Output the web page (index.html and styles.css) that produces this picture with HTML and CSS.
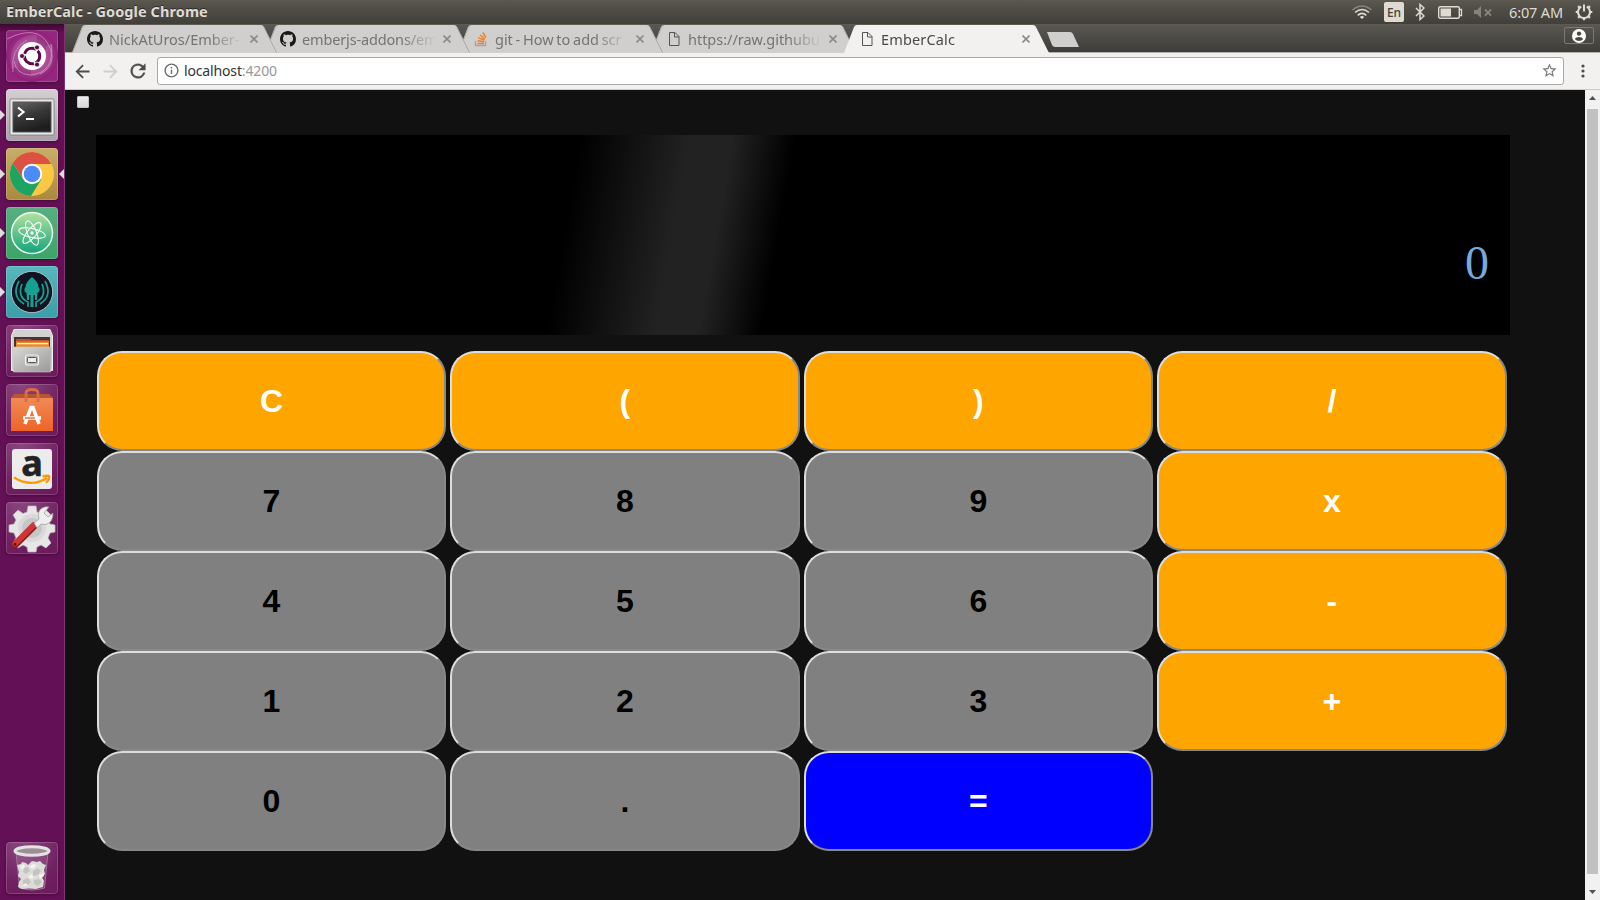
FILE: index.html
```html
<!DOCTYPE html>
<html lang="en">
<head>
<meta charset="utf-8">
<title>EmberCalc</title>
<link rel="stylesheet" href="styles.css">
</head>
<body>
<svg class="defs" width="0" height="0">
  <defs>
    <linearGradient id="screen" x1="0" y1="0" x2=".4" y2="1"><stop offset="0" stop-color="#666"/><stop offset=".5" stop-color="#393939"/><stop offset="1" stop-color="#1e1e1e"/></linearGradient>
    <linearGradient id="metal" x1="0" y1="0" x2="1" y2="1"><stop offset="0" stop-color="#d8d8d6"/><stop offset="1" stop-color="#999"/></linearGradient>
    <linearGradient id="bag" x1="0" y1="0" x2="0" y2="1"><stop offset="0" stop-color="#f08a56"/><stop offset="1" stop-color="#ee6426"/></linearGradient>
    <linearGradient id="leaf" x1="0" y1="0" x2="0" y2="1"><stop offset="0" stop-color="#b4e2a0"/><stop offset="1" stop-color="#12a479"/></linearGradient>
    <radialGradient id="glow"><stop offset="0" stop-color="#b96ba8"/><stop offset="1" stop-color="#8e1f77"/></radialGradient>
    <symbol id="github" viewBox="0 0 16 16"><path fill="#191919" d="M8 0C3.58 0 0 3.58 0 8c0 3.54 2.29 6.53 5.47 7.59.4.07.55-.17.55-.38 0-.19-.01-.82-.01-1.49-2.01.37-2.53-.49-2.69-.94-.09-.23-.48-.94-.82-1.13-.28-.15-.68-.52-.01-.53.63-.01 1.08.58 1.23.82.72 1.21 1.87.87 2.33.66.07-.52.28-.87.51-1.07-1.78-.2-3.64-.89-3.64-3.95 0-.87.31-1.59.82-2.15-.08-.2-.36-1.02.08-2.12 0 0 .67-.21 2.2.82.64-.18 1.32-.27 2-.27s1.36.09 2 .27c1.53-1.04 2.2-.82 2.2-.82.44 1.1.16 1.92.08 2.12.51.56.82 1.27.82 2.15 0 3.07-1.87 3.75-3.65 3.95.29.25.54.73.54 1.48 0 1.07-.01 1.93-.01 2.2 0 .21.15.46.55.38A8.01 8.01 0 0 0 16 8c0-4.42-3.58-8-8-8z"/></symbol>
    <symbol id="page" viewBox="0 0 16 16"><path fill="none" stroke="#555" d="M3.500 1.500h5.500l4 4v9h-9.500zM8.500 1.500v4.500h4.500"/></symbol>
    <symbol id="cross" viewBox="0 0 8 8"><path stroke="#8b8a88" stroke-width="1.600" d="M.5.500l7 7M7.500.500l-7 7"/></symbol>
    <symbol id="tabshape" viewBox="0 0 205 28"><path fill="currentColor" d="M0 28L10 2Q11 0 13 0H189Q191 0 192 2L205 28z"/><path fill="none" stroke="#a9a8a5" d="M.5 27.500L10.500 2Q11 .500 13 .500M191.500 1.500L204.500 27.500"/></symbol>
    <symbol id="tabactive" viewBox="0 0 205 28"><path fill="currentColor" d="M0 28L10 2Q11 0 13 0H189Q191 0 192 2L205 28z"/></symbol>
  </defs>
</svg>

<header class="panel">
  <span class="panel-title">EmberCalc - Google Chrome</span>
  <div class="status">
    <svg class="wifi" width="22" height="16" viewBox="0 0 22 16" fill="none" stroke="#dfdbd2" stroke-width="1.600"><path stroke="#84827a" d="M1.500 6Q11-2 20.500 6"/><path d="M4 8.500Q11 2.500 18 8.500M6.700 11.300Q11 7.500 15.300 11.300"/><path fill="#dfdbd2" stroke="none" d="M8.700 13Q11 11.200 13.300 13L11 15z"/></svg>
    <span class="lang">En</span>
    <svg class="bt" width="10" height="18" viewBox="0 0 10 18" fill="none" stroke="#dfdbd2" stroke-width="1.500"><path d="M1 5l8 8-4 3.500v-15L9 5l-8 8"/></svg>
    <svg class="batt" width="25" height="13" viewBox="0 0 25 13"><rect x=".7" y=".7" width="20.600" height="11.600" rx="1.500" fill="none" stroke="#dfdbd2" stroke-width="1.400"/><path fill="#dfdbd2" d="M2.500 2.500H13v8H2.500z"/><path fill="none" stroke="#dfdbd2" stroke-width="1.300" d="M21.500 3.500h2v6h-2"/></svg>
    <svg class="vol" width="18" height="12" viewBox="0 0 18 12"><path fill="#85837c" d="M0 4h3l4-4v12L3 8H0z"/><path stroke="#85837c" stroke-width="1.800" d="M11 3.500l6 6M17 3.500l-6 6"/></svg>
    <span class="clock">6:07 AM</span>
    <svg class="gear" width="18" height="18" viewBox="0 0 18 18" fill="none" stroke="#dfdbd2"><path stroke-width="2" d="M6.200 3.700a6 6 0 1 0 5.600 0M9 1.500v7"/><path stroke-width="2.200" d="M.7 9H3M15 9h2.300M9 15v2.300M3.100 3.100l1.600 1.600M14.900 3.100l-1.600 1.600M3.100 14.900l1.600-1.600M14.900 14.900l-1.600-1.600"/></svg>
  </div>
</header>

<div class="desktop">
  <nav class="launcher">
    <div class="app dash"><svg viewBox="0 0 52 52"><circle cx="26" cy="26" r="26" fill="url(#glow)"/><g fill="none" stroke="#dca4cf" stroke-opacity=".65"><path d="M1 9Q31-6 42 14T34 44M7 42Q4 19 21 10M45 14q4 29-21 31Q10 44 8 31"/><path stroke-opacity=".18" stroke-width="7" d="M9 38Q4 9 31 8M43 15q4 26-18 28"/></g><circle cx="26" cy="26" r="14" fill="#fff"/><circle cx="26" cy="26" r="7.700" fill="none" stroke="#5c0b4b" stroke-width="3" stroke-dasharray="14.200 1.920" stroke-dashoffset="6"/><g fill="#5c0b4b" stroke="#fff" stroke-width=".8"><circle cx="16" cy="26" r="2.500"/><circle cx="31" cy="17.400" r="2.500"/><circle cx="31" cy="34.600" r="2.500"/></g></svg></div>
    <div class="app terminal running"><svg viewBox="0 0 52 52"><rect x="4" y="10" width="44" height="36" rx="1" fill="#e9e9e9" stroke="#777" stroke-width=".8"/><rect x="7" y="13" width="38" height="30" fill="url(#screen)" stroke="#555"/><path fill="none" stroke="#fff" stroke-width="2.200" d="M12 18.500l5.500 4.500-5.500 4.500M20 30h8"/></svg></div>
    <div class="app chrome running focused"><svg viewBox="0 0 52 52"><circle cx="26" cy="26" r="22" fill="#fcc844"/><path fill="#dd5144" d="M6.900 15A22 22 0 0 1 45.500 16H26L17 31z"/><path fill="#1da462" d="M6.900 15A22 22 0 0 0 25 48L35.500 31H17z"/><circle cx="26" cy="26" r="10.200" fill="#fff"/><circle cx="26" cy="26" r="8.300" fill="#4c8bf5"/></svg></div>
    <div class="app atom running"><svg viewBox="0 0 52 52"><circle cx="26" cy="26" r="20.500" fill="url(#leaf)" stroke="#eefbf3" stroke-width="1.500"/><g fill="none" stroke="#f1fff8" stroke-width="1.100"><ellipse cx="26" cy="26" rx="13.500" ry="4.500" transform="rotate(12 26 26)"/><ellipse cx="26" cy="26" rx="13" ry="4.500" transform="rotate(68 26 26)"/><ellipse cx="26" cy="26" rx="13" ry="4.500" transform="rotate(130 26 26)"/></g><circle cx="26" cy="26" r="1.700" fill="#fff"/></svg></div>
    <div class="app kraken running"><svg viewBox="0 0 52 52"><circle cx="26" cy="26" r="20.700" fill="#121521" stroke="#a9bcc0"/><path fill="#179f90" d="M26 11c4 3 6.500 7 6.500 10 2 3 1 5-1 6l-.5 7h-2v-5h-1.500v12h-3V29H23v5h-2l-.500-7c-2-1-3-3-1-6 0-3 2.500-7 6.500-10z"/><g fill="none" stroke="#179f90" stroke-width="1.700"><path d="M13 15Q5 30 18 38M16 18q-5 13 6 18v5M39 15q8 15-5 23M36 18q5 13-6 18v5"/></g></svg></div>
    <div class="app files"><svg viewBox="0 0 52 52"><path fill="#d2d2d0" stroke="#eee" d="M8 4.500h36l2.500 6v35h-41v-35z"/><path fill="#4a3430" d="M8 12h36v12H8z"/><path fill="#b9532b" d="M10 14h14l2 1h17v8H10z"/><path fill="#e88a2e" d="M10 16.500h33v7H10z"/><path fill="#fff2dc" d="M11 18h31v1.200H11z"/><path fill="url(#metal)" stroke="#c8c8c6" stroke-width=".6" d="M6.500 22h39l-1 25h-37z"/><rect x="19.500" y="30" width="13" height="10" rx="2" fill="#b8b8b6" stroke="#eee" stroke-width="1.200"/><rect x="21.500" y="32.500" width="9" height="5" rx="1" fill="#eee" stroke="#555"/></svg></div>
    <div class="app software"><svg viewBox="0 0 52 52"><path fill="#b55732" d="M5 14l3-4h35l4 4z"/><path fill="url(#bag)" d="M5 14h42v33H5z"/><path fill="none" stroke="#dc6c43" stroke-width="2.800" d="M20 18V9q0-3.500 6-3.500t6 3.500v9"/><g fill="none" stroke="#fff"><path stroke-width="3.600" d="M19 40l6-16.500h2L33 40M17 34h18"/><path stroke="#ef7034" stroke-width="1.300" d="M19 34h10"/></g></svg></div>
    <div class="app amazon"><svg viewBox="0 0 52 52"><rect x="6" y="6" width="40" height="40" rx="3" fill="#ececec"/><text x="26" y="33" text-anchor="middle" class="amazon-a">a</text><path fill="none" stroke="#f90" stroke-width="2.400" d="M8 34.500Q25 45 41 35M36.500 33.500q8-2 6.500 1 0 3-3 5"/></svg></div>
    <div class="app settings"><svg viewBox="0 0 52 52"><path fill="#e6e6e6" stroke="#bbb" stroke-width=".7" d="M22 4h8l1 6 4 1.500 5-3.500 5 5-3 5 2 4 5 1v7l-5 1-2 5 3 5-5 5-5-3-4 2-1 5h-8l-1-5-4-2-5 3-5-5 3-5-2-5-5-1v-7l5-1 2-4-3-5 5-5 5 3.500 4-1.500z"/><circle cx="26" cy="26" r="12" fill="#c6c6c6" stroke="#d9d9d9" stroke-width="4"/><path stroke="#7e1919" stroke-width="7" stroke-linecap="round" d="M9 43L28 24"/><path stroke="#d33434" stroke-width="5.500" stroke-linecap="round" d="M9 42L28 23"/><path fill="#eee" stroke="#999" stroke-width=".7" d="M28 21l5-4q-2-8 3-11 4-2 7-1l-5 6 4 4 5-4q0 9-6 11-3 1-6 0l-4 4z"/><circle cx="9" cy="42.500" r="1.400" fill="#511"/></svg></div>
    <div class="app trash"><svg viewBox="0 0 52 52"><path fill="#fff" fill-opacity=".12" stroke="#b08fa8" stroke-width=".7" d="M10 10h32l-3.500 36q-12 4-25 0z"/><path fill="#dcddd9" d="M11 23l4-1 1-2 4 1 2 2 2-2 2-2 5 1 3-1 3 3 3 1-2 5 1 4-3 3 2 4-1 6-7 2-7-.500-7 .500-4-2 1-5 2-3-3-3 1-4z"/><path fill="#c3c6bf" d="M18 26l4-1 2 4-4 3-3-2zM27 29l5-3 3 3-3 4-5 1zM17 38l5-2 3 4-4 4-4-2zM28 38l5-1 3 3-4 4-4-2z"/><path fill="#f2f3f0" d="M14 24l4-2 1 3-3 3zM23 25l4-3 4 1-4 4zM33 33l4-2 1 3-4 3zM22 34l4-2 2 4-4 1zM16 44l4-3 2 3z"/><ellipse cx="26" cy="9" rx="17" ry="4.300" fill="#9c8f98" stroke="#e3e4e1" stroke-width="3"/></svg></div>
  </nav>

  <main class="window">
    <div class="tabstrip">
      <div class="tab t1"><svg class="shape"><use href="#tabshape"/></svg><svg class="fav"><use href="#github"/></svg><span class="label">NickAtUros/Ember-</span><svg class="close"><use href="#cross"/></svg></div>
      <div class="tab t2"><svg class="shape"><use href="#tabshape"/></svg><svg class="fav"><use href="#github"/></svg><span class="label addons">emberjs-addons/em</span><svg class="close"><use href="#cross"/></svg></div>
      <div class="tab t3"><svg class="shape"><use href="#tabshape"/></svg><svg class="fav" viewBox="0 0 16 16" fill="none"><path stroke="#a5a4a2" stroke-width="1.300" d="M2.500 10v4.500h10V10"/><path stroke="#f07f24" stroke-width="1.400" d="M4.500 12.500h6.500M4.500 9.800l6.500.9M5.200 6.800l6.200 2.200M7 4l5 4M9.800 1.500l3.200 5"/></svg><span class="label howto">git - How to add scr</span><svg class="close"><use href="#cross"/></svg></div>
      <div class="tab t4"><svg class="shape"><use href="#tabshape"/></svg><svg class="fav"><use href="#page"/></svg><span class="label">https://raw.githubu</span><svg class="close"><use href="#cross"/></svg></div>
      <div class="tab active"><svg class="shape"><use href="#tabactive"/></svg><svg class="fav"><use href="#page"/></svg><span class="label">EmberCalc</span><svg class="close"><use href="#cross"/></svg></div>
      <svg class="newtab" width="33" height="15" viewBox="0 0 33 15"><path fill="#d0cfcd" d="M1 0h23q2 0 3 2l6 13H9q-2 0-3-2z"/></svg>
      <div class="profile"><svg width="14" height="14" viewBox="0 0 14 14"><circle cx="7" cy="7" r="7" fill="#fff"/><circle cx="7" cy="4.600" r="2.200" fill="#494842"/><path fill="#494842" d="M2.700 10Q4 7.900 7 7.900T11.300 10Q9.500 12 7 12T2.700 10z"/></svg></div>
    </div>

    <div class="toolbar">
      <svg class="back" viewBox="0 0 24 24"><path fill="#4b4b4b" d="M20 10.800H8l5.400-5.400L12 4l-8 8 8 8 1.400-1.400L8 13.200h12z"/></svg>
      <svg class="forward" viewBox="0 0 24 24"><path fill="#cfcecc" d="M4 10.800h12l-5.400-5.400L12 4l8 8-8 8-1.400-1.400 5.400-5.400H4z"/></svg>
      <svg class="reload" viewBox="0 0 24 24"><path fill="#4b4b4b" stroke="#4b4b4b" stroke-width=".4" d="M17.650 6.350A7.960 7.960 0 0 0 12 4a8 8 0 1 0 7.730 10h-2.080A6 6 0 1 1 12 6c1.660 0 3.140.69 4.220 1.780L13 11h7V4z"/></svg>
      <div class="omnibox">
        <svg class="info" viewBox="0 0 24 24"><path fill="#6c6c6c" d="M11 17h2v-6h-2v6zm1-15a10 10 0 1 0 0 20 10 10 0 0 0 0-20zm0 18a8 8 0 1 1 0-16 8 8 0 0 1 0 16zM11 9h2V7h-2z"/></svg>
        <span class="url">localhost<span class="port">:4200</span></span>
        <svg class="star" viewBox="0 0 24 24"><path fill="#777" d="M22 9.240l-7.190-.62L12 2 9.190 8.630 2 9.240l5.460 4.730L5.820 21 12 17.270 18.180 21l-1.630-7.030zM12 15.400l-3.760 2.270 1-4.280-3.320-2.880 4.380-.38L12 6.100l1.710 4.040 4.380.38-3.320 2.880 1 4.280z"/></svg>
      </div>
      <svg class="menu" width="4" height="14" viewBox="0 0 4 14" fill="#4b4b4b"><circle cx="2" cy="2" r="1.600"/><circle cx="2" cy="7" r="1.600"/><circle cx="2" cy="12" r="1.600"/></svg>
    </div>

    <div class="viewport">
      <div class="page">
        <span class="check"></span>
        <section class="calculator">
          <div class="display">0</div>
          <div class="keys">
            <button class="key op">C</button><button class="key op">(</button><button class="key op">)</button><button class="key op">/</button>
            <button class="key">7</button><button class="key">8</button><button class="key">9</button><button class="key op">x</button>
            <button class="key">4</button><button class="key">5</button><button class="key">6</button><button class="key op">-</button>
            <button class="key">1</button><button class="key">2</button><button class="key">3</button><button class="key op">+</button>
            <button class="key">0</button><button class="key">.</button><button class="key equals">=</button>
          </div>
        </section>
      </div>
      <div class="scrollbar">
        <svg width="7" height="4" viewBox="0 0 7 4"><path fill="#505050" d="M0 4l3.500-4L7 4z"/></svg>
        <div class="thumb"></div>
        <svg width="7" height="4" viewBox="0 0 7 4"><path fill="#505050" d="M0 0l3.500 4L7 0z"/></svg>
      </div>
    </div>
  </main>
</div>
</body>
</html>
```

FILE: styles.css
```css
* { box-sizing: border-box; }
body { margin: 0; width: 1600px; height: 900px; overflow: hidden; display: flex; flex-direction: column; font-family: "Noto Sans", "Open Sans", sans-serif; background: #111; }
svg { display: block; flex: none; }
.defs { position: absolute; }

.panel { height: 24px; flex: none; display: flex; align-items: center; justify-content: space-between; padding: 0 7px 0 6px; background: linear-gradient(#5d5b50 0, #57554c 2px, #403f3a 100%); color: #dfdbd2; }
.panel-title { padding-bottom: 2px; font-weight: 700; font-size: 14.5px; letter-spacing: .08px; line-height: 20px; white-space: nowrap; text-shadow: 0 -1px #2c2b28; }
.status { display: flex; align-items: center; }
.lang { width: 20px; height: 20px; margin-left: 11px; border-radius: 2px; background: #dfdbd2; color: #45443e; font-size: 12px; font-weight: 500; line-height: 21px; text-align: center; }
.bt { margin-left: 11px; }
.batt { margin-left: 13px; }
.vol { margin-left: 11px; }
.clock { margin-left: 17px; padding-bottom: 1px; width: 54px; font-size: 14.5px; line-height: 20px; letter-spacing: -.15px; white-space: nowrap; }
.gear { margin-left: 12px; }

.desktop { flex: 1; display: flex; min-height: 0; }
.launcher { width: 65px; flex: none; padding: 6px 0 6px 6px; display: flex; flex-direction: column; gap: 7px; border-right: 1px solid #7e3472; background: linear-gradient(#3d0831 0, #641056 9px, #641056 100%); }
.app { position: relative; width: 52px; height: 52px; flex: none; border-radius: 4px; background: radial-gradient(circle at 30% 0, #a0649599, #7a2e6c55 65%, transparent), #6b1a5c; box-shadow: inset 0 0 0 1px #ffffff2b, 0 1px 3px #2c052788; }
.app > svg { width: 52px; height: 52px; border-radius: 4px; }
.dash { background: #942880; }
.terminal { background: linear-gradient(#d5cfd4, #aaa0aa); }
.chrome { background: linear-gradient(#c7ae68, #aa893d); }
.atom { background: linear-gradient(#58af80, #3ca569); }
.kraken { background: linear-gradient(#57b7bd, #3b9ea8); }
.trash { margin-top: auto; }
.amazon-a { font: 700 36px "Noto Sans", sans-serif; fill: #222; stroke: #222; stroke-width: .6px; }
.running::before { content: ""; position: absolute; left: -6px; top: 21px; border: 5px solid transparent; border-left-color: #ddd; border-right: 0; }
.focused::after { content: ""; position: absolute; left: 53px; top: 21px; border: 5px solid transparent; border-right-color: #ddd; border-left: 0; }

.window { flex: 1; min-width: 0; display: flex; flex-direction: column; }
.tabstrip { height: 29px; flex: none; display: flex; padding: 1px 6px 0 7px; background: linear-gradient(#625f50 0, #595750 1px, #3e3d38 28px, #b1b0ad 28px); }
.tab { position: relative; width: 205px; height: 28px; margin-right: -12px; flex: none; display: flex; align-items: center; padding-left: 15px; color: #d0cfcd; }
.t1 { z-index: 4; }
.t2 { z-index: 3; }
.t3 { z-index: 2; }
.t4 { z-index: 1; }
.active { z-index: 5; color: #f2f1f0; }
.shape { position: absolute; left: 0; top: 0; width: 205px; height: 28px; }
.fav { position: relative; width: 16px; height: 16px; }
.label { position: relative; margin-left: 6px; padding-bottom: 1px; width: 133px; white-space: nowrap; font-size: 14.5px; line-height: 20px; color: #757472; letter-spacing: -.02px; -webkit-mask-image: linear-gradient(90deg, #000 100px, transparent 134px); mask-image: linear-gradient(90deg, #000 100px, transparent 134px); }
.addons { letter-spacing: -.15px; }
.howto { word-spacing: -1px; }
.active .label { color: #4b4a48; letter-spacing: .15px; }
.close { position: relative; margin-left: 8px; width: 8px; height: 8px; }
.newtab { margin: 7px 0 0 9px; }
.profile { width: 30px; height: 17px; margin: 2px 0 0 auto; border: 1px solid #7b7972; border-radius: 2px; display: flex; align-items: center; justify-content: center; }

.toolbar { height: 37px; flex: none; display: flex; align-items: center; padding: 0 15.500px 0 7px; background: #f2f1f0; border-bottom: 1px solid #cbcac7; }
.back, .forward { width: 21px; height: 21px; }
.forward { margin-left: 7px; }
.reload { width: 22px; height: 22px; margin-left: 6px; }
.omnibox { flex: 1; height: 28px; margin: 0 16.500px 1px 8px; display: flex; align-items: center; padding: 0 5px; background: #fff; border: 1px solid #aaa9a7; border-radius: 3px; }
.info { width: 17px; height: 17px; }
.url { flex: 1; margin-left: 4px; font-size: 14px; letter-spacing: -.15px; line-height: 20px; color: #333; }
.port { color: #979797; }
.star { width: 17px; height: 17px; }

.viewport { flex: 1; display: flex; min-height: 0; }
.page { flex: 1; padding: 6px 75px 0 12px; background: #111; }
.check { display: block; width: 12px; height: 12px; border-radius: 1px; border: 1px solid #c4c4c4; background: linear-gradient(#ececec, #dadada); }
.calculator { margin: 27px 0 0 19px; }
.display { height: 200px; padding: 100px 21px 0 0; text-align: right; font: 48px/56px "Liberation Serif", serif; color: #76a9dc; background: linear-gradient(100deg, #000 33.500%, #222 41%, #222 44%, #000 48.300%); }
.keys { display: grid; grid-template-columns: repeat(4, 1fr); grid-auto-rows: 100px; padding-top: 16px; }
.key { margin: 0 3.500px 0 .9px; padding: 0; border: 2px solid; border-color: #ddd #888 #888 #ddd; border-radius: 25px; background: gray; color: #000; font: 700 32px "Liberation Sans", Arial, sans-serif; }
.op { background: orange; color: #fff; }
.equals { background: blue; color: #fff; }
.scrollbar { width: 15px; flex: none; background: #f1f1f1; display: flex; flex-direction: column; align-items: center; padding: 6px 0; }
.thumb { width: 11px; height: 765px; margin: 9px 0 16px; flex: none; background: #c1c1c1; }
```
